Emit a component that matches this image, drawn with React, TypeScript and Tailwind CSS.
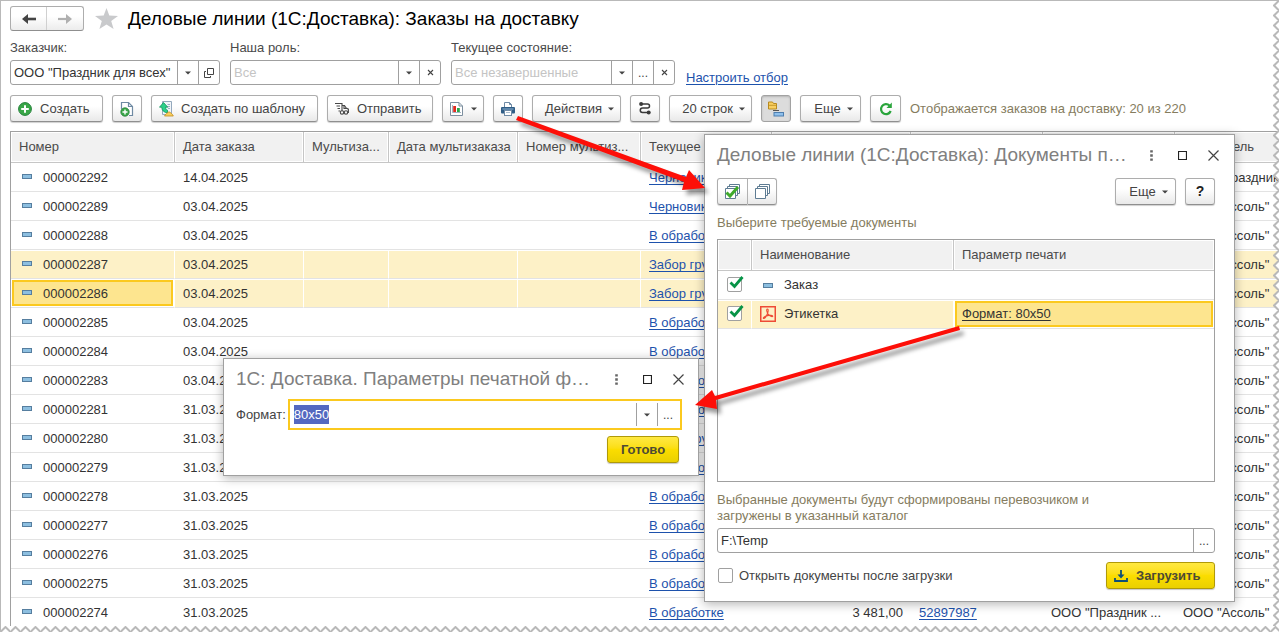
import { useEffect, useRef } from "react";
import type { ReactNode } from "react";

type Order = { id: string; date: string; status: string; total?: string; waybill?: string; customer?: string; sender: string; marked?: boolean; current?: boolean };

const ASSOL = 'ООО "Ассоль"';

const orders: Order[] = [
  { id: "000002292", date: "14.04.2025", status: "Черновик", sender: 'ООО "Праздник для всех"' },
  { id: "000002289", date: "03.04.2025", status: "Черновик", sender: ASSOL },
  { id: "000002288", date: "03.04.2025", status: "В обработке", sender: ASSOL },
  { id: "000002287", date: "03.04.2025", status: "Забор груза", sender: ASSOL, marked: true },
  { id: "000002286", date: "03.04.2025", status: "Забор груза", sender: ASSOL, marked: true, current: true },
  { id: "000002285", date: "03.04.2025", status: "В обработке", sender: ASSOL },
  { id: "000002284", date: "03.04.2025", status: "В обработке", sender: ASSOL },
  { id: "000002283", date: "03.04.2025", status: "В обработке", sender: ASSOL },
  { id: "000002281", date: "31.03.2025", status: "В обработке", sender: ASSOL },
  { id: "000002280", date: "31.03.2025", status: "Забор груза", sender: ASSOL },
  { id: "000002279", date: "31.03.2025", status: "В обработке", sender: ASSOL },
  { id: "000002278", date: "31.03.2025", status: "В обработке", sender: ASSOL },
  { id: "000002277", date: "31.03.2025", status: "В обработке", sender: ASSOL },
  { id: "000002276", date: "31.03.2025", status: "В обработке", sender: ASSOL },
  { id: "000002275", date: "31.03.2025", status: "В обработке", sender: ASSOL },
  { id: "000002274", date: "31.03.2025", status: "В обработке", total: "3 481,00", waybill: "52897987", customer: 'ООО "Праздник ...', sender: ASSOL },
];

const headers = ["Номер", "Дата заказа", "Мультиза...", "Дата мультизаказа", "Номер мультиз...", "Текущее состояние", "", "", "", "Получатель"];

function Caret() {
  return (
    <svg width="6" height="4" viewBox="0 0 6 4" className="shrink-0" aria-hidden="true">
      <path d="M0 0.5H6L3 3.5Z" fill="#444" />
    </svg>
  );
}

function ToolButton({ className = "", label, pressed, start, children }: { className?: string; label?: string; pressed?: boolean; start?: boolean; children: ReactNode }) {
  const look = pressed
    ? "bg-[#dcdcdc] border-[#a2a2a2] shadow-[inset_0_1px_2px_#b5b5b5]"
    : "bg-linear-to-b from-white from-40% to-[#e9e9e9] border-[#adadad] border-b-[#8f8f8f] shadow-[0_1px_1px_#d0d0d0]";
  return (
    <button type="button" aria-label={label} aria-pressed={pressed} className={`flex h-[27px] shrink-0 items-center rounded-[3px] border whitespace-nowrap text-[#444] ${start ? "justify-start pl-[7px]" : "justify-center"} ${look} ${className}`}>
      {children}
    </button>
  );
}

function FieldButton({ label, children }: { label: string; children: ReactNode }) {
  return (
    <button type="button" aria-label={label} className="flex w-[21px] shrink-0 items-center justify-center border-l border-[#a0a0a0] text-[12px] text-[#444]">
      {children}
    </button>
  );
}

function SmallCross() {
  return (
    <svg width="7" height="7" viewBox="0 0 7 7" aria-hidden="true">
      <path d="M1 1L6 6M6 1L1 6" stroke="#444" strokeWidth="1.1" />
    </svg>
  );
}

function Field({ id, label, value, placeholder, className, children }: { id: string; label: string; value?: string; placeholder?: string; className: string; children: ReactNode }) {
  return (
    <div className={`flex flex-col gap-1 ${className}`}>
      <label htmlFor={id} className="leading-4 text-[#4a4a4a]">{label}</label>
      <div className="flex h-[25px] rounded-[3px] border border-[#a0a0a0] bg-white">
        <input id={id} defaultValue={value} placeholder={placeholder} className="min-w-0 flex-1 bg-transparent pl-[3px] text-[#333] outline-none placeholder:text-[#c4c4c4]" />
        {children}
      </div>
    </div>
  );
}

function Dash() {
  return (
    <svg width="10" height="5" viewBox="0 0 10 5" className="shrink-0" aria-hidden="true">
      <rect x="0.5" y="0.5" width="9" height="4" fill="#8dbfe0" stroke="#567e9f" />
    </svg>
  );
}

function WindowControls() {
  return (
    <div className="flex shrink-0 items-center">
      <button type="button" aria-label="Меню" className="flex w-[31px] justify-center">
        <svg width="3" height="11" viewBox="0 0 3 11"><path d="M0.2 0.2h2.6v2.4h-2.6zM0.2 4.3h2.6v2.4h-2.6zM0.2 8.4h2.600v2.400h-2.600z" fill="#666" /></svg>
      </button>
      <button type="button" aria-label="Развернуть" className="flex w-[31px] justify-center">
        <svg width="9" height="9" viewBox="0 0 9 9"><path d="M0.5 0.5h8v8h-8z" fill="none" stroke="#222" strokeWidth="1.2" /></svg>
      </button>
      <button type="button" aria-label="Закрыть" className="flex w-[31px] justify-center">
        <svg width="11" height="11" viewBox="0 0 11 11"><path d="M0.5 0.5L10.5 10.5M10.5 0.5L0.5 10.5" stroke="#444" strokeWidth="1.2" /></svg>
      </button>
    </div>
  );
}

function PlusCircle() {
  return (
    <svg width="14" height="14" viewBox="0 0 14 14" aria-hidden="true">
      <circle cx="7" cy="7" r="6.4" fill="#3aa748" stroke="#24803a" />
      <path d="M7 3.2V10.8M3.2 7H10.8" stroke="#fff" strokeWidth="2" />
    </svg>
  );
}

function PagePlus() {
  return (
    <svg width="14" height="16" viewBox="0 0 14 16" aria-hidden="true">
      <path d="M1.5 8V1.5H8.5L12.5 5.5V14.5H9" fill="#fff" stroke="#6f8aa3" strokeWidth="1.2" />
      <path d="M8.5 1.5V5.5H12.5" fill="none" stroke="#6f8aa3" strokeWidth="1.2" />
      <circle cx="5" cy="11" r="4.2" fill="#3aa748" stroke="#24803a" strokeWidth="0.8" />
      <path d="M5 8.5V13.5M2.5 11H7.5" stroke="#fff" strokeWidth="1.4" />
    </svg>
  );
}

function TemplateIcon() {
  return (
    <svg width="15" height="16" viewBox="0 0 15 16" aria-hidden="true">
      <path d="M3.5 0.5H12.5V13.5H3.5Z" fill="#f1f5f9" stroke="#94a9bd" />
      <path d="M8.500 3.500H11M8.500 5.500H11M9 7.500H11" stroke="#9db1c4" />
      <path d="M4.500 1.500L0.500 6.200H2.700C2.900 9.500 5 11.600 8.500 11.800V9.200C7.200 8.800 6.500 7.800 6.500 6.200H8.800Z" fill="#2bd08a" stroke="#10935a" strokeWidth="0.8" />
      <path d="M5.500 15C6.500 13.200 8 12 10 10.800C11.600 11.600 13.500 13 14.300 15Z" fill="#f8cf5d" stroke="#c08a1d" strokeWidth="0.8" />
    </svg>
  );
}

function TruckIcon() {
  return (
    <svg width="14" height="13" viewBox="0 0 14 13" fill="none" stroke="#484848" strokeWidth="1.1" aria-hidden="true">
      <path d="M0 1.5H7V9M1.500 4H5M2.500 6.500H5M3.500 9H5" />
      <path d="M7 3.500H9.500L11.200 6L13.400 7.200V10.500H12.800M9.300 10.500H8.800" />
      <path d="M9 3.500V6.500H12" />
      <circle cx="7" cy="10.500" r="1.700" />
      <circle cx="11" cy="10.500" r="1.700" />
    </svg>
  );
}

function ReportIcon() {
  return (
    <svg width="13" height="14" viewBox="0 0 13 14" aria-hidden="true">
      <path d="M0.5 0.5H9L12.5 4V13.5H0.5Z" fill="#fff" stroke="#7d8f9f" />
      <path d="M9 0.5V4H12.5" fill="none" stroke="#7d8f9f" />
      <path d="M2.500 3V10.500H11" fill="none" stroke="#8da1b4" strokeWidth="0.8" />
      <rect x="3.2" y="4" width="2.8" height="6" fill="#e02b20" />
      <rect x="7" y="6" width="2.8" height="4" fill="#2aa646" />
    </svg>
  );
}

function PrinterIcon() {
  return (
    <svg width="14" height="14" viewBox="0 0 14 14" aria-hidden="true">
      <path d="M3.5 6V0.5H8.5L10.5 2.5V6" fill="#fff" stroke="#6f8ba6" />
      <path d="M8.5 0.5V2.5H10.5" fill="none" stroke="#6f8ba6" />
      <rect x="0" y="5" width="14" height="6.5" rx="1" fill="#2f5d86" />
      <path d="M1.5 7H12.5" stroke="#91b4d2" />
      <rect x="3.5" y="8.5" width="7" height="5" fill="#fff" stroke="#6f8ba6" />
      <path d="M5 10.5H9" stroke="#a9bccd" />
    </svg>
  );
}

function RouteIcon() {
  return (
    <svg width="12" height="13" viewBox="0 0 12 13" fill="none" stroke="#3b3b3b" strokeWidth="1.5" aria-hidden="true">
      <path d="M2 2H8.5A2 2 0 0 1 8.5 6H3.5A2.2 2.2 0 0 0 3.5 10.5H9.5" />
      <circle cx="2.1" cy="2.1" r="2" fill="#3b3b3b" stroke="none" />
      <circle cx="9.7" cy="10.5" r="2" fill="#3b3b3b" stroke="none" />
    </svg>
  );
}

function TreeIcon() {
  return (
    <svg width="16" height="16" viewBox="0 0 16 16" aria-hidden="true">
      <path d="M0.5 1H4.5L5.5 2.5H8.5V8H0.5Z" fill="#f9cf61" stroke="#b88a1f" />
      <path d="M0.5 4.3H8.5" stroke="#b88a1f" strokeWidth="0.8" />
      <path d="M5 9.5H11" stroke="#555" />
      <rect x="6" y="11.5" width="9.5" height="3.5" fill="#8fc0ec" stroke="#4d7eaf" />
    </svg>
  );
}

function RefreshIcon() {
  return (
    <svg width="14" height="14" viewBox="0 0 14 14" aria-hidden="true">
      <path d="M11.7 9A5 5 0 1 1 10.5 3.5" fill="none" stroke="#2aa53c" strokeWidth="2.2" />
      <path d="M12.8 0.5V6H7.5Z" fill="#2aa53c" />
    </svg>
  );
}

function StackIcon({ checked }: { checked?: boolean }) {
  return (
    <svg width="17" height="16" viewBox="0 0 17 16" aria-hidden="true">
      <g fill="#fff" stroke="#5e7c93">
        <path d="M5.5 0.5H15.5V9.5H5.5Z" />
        <path d="M3.5 2.5H13.5V11.5H3.5Z" />
        <path d="M1.5 4.5H11.5V14.5H1.5Z" />
      </g>
      {checked && <path d="M2.5 8.500L6 12L14 3" fill="none" stroke="#3faa2c" strokeWidth="3" />}
    </svg>
  );
}

function PdfIcon() {
  return (
    <svg width="16" height="16" viewBox="0 0 16 16" fill="none" stroke="#ee4b36" aria-hidden="true">
      <rect x="0.75" y="0.75" width="14.5" height="14.5" strokeWidth="1.5" />
      <path d="M7.2 3C8.6 2.800 8.300 5.500 7.500 7.500C6.500 10 4.500 12.800 3.400 12.400C2.800 11.600 5 10.200 7.500 9.600C10 9 12.800 9.200 12.800 10.300C12 11.400 8.800 9.500 7.700 7.600C6.800 5.700 6.300 3.500 7.200 3Z" strokeWidth="1.1" />
    </svg>
  );
}

function DownloadIcon() {
  return (
    <svg width="14" height="12" viewBox="0 0 14 12" aria-hidden="true">
      <path d="M7 0V5M1 8V11H13V8" fill="none" stroke="#0d4f78" strokeWidth="1.8" />
      <path d="M3.500 4.500H10.500L7 8.500Z" fill="#0d4f78" />
    </svg>
  );
}

function CheckBox({ label, checked }: { label: string; checked?: boolean }) {
  return (
    <span className="relative block size-[15px]">
      <input type="checkbox" aria-label={label} defaultChecked={checked} className="peer block size-[15px] appearance-none rounded-[2px] border border-[#a0a0a0] bg-white" />
      <svg width="15" height="14" viewBox="0 0 15 14" className="pointer-events-none absolute -top-px left-[2px] hidden peer-checked:block" aria-hidden="true">
        <path d="M1.5 6.500L5.500 10.500L13.500 1" fill="none" stroke="#079447" strokeWidth="2.8" />
      </svg>
    </span>
  );
}

function YellowButton({ className, children }: { className: string; children: ReactNode }) {
  return (
    <button type="button" className={`flex h-[27px] items-center gap-2 rounded-[3px] border border-[#b09a08] bg-linear-to-b from-[#ffe940] via-[#fbdd00] to-[#ead000] font-bold text-[#4d4a35] shadow-[0_1px_1px_#c8c8c8] ${className}`}>
      {children}
    </button>
  );
}

function OrderRow({ order }: { order: Order }) {
  const tone = order.marked ? "bg-[#fdf1c7] border-r border-r-white shadow-[inset_0_1px_#fff]" : "";
  const cell = `h-[29px] overflow-hidden whitespace-nowrap border-b border-b-[#e3e3e3] px-2 pt-[2px] ${tone}`;
  const first = order.current
    ? "h-[29px] border-b border-b-[#e3e3e3] border-r border-r-white bg-[#fde58f] px-2 pt-[2px] shadow-[inset_0_0_0_1px_#fff,inset_0_0_0_3px_#fbc91f]"
    : cell;
  return (
    <tr>
      <td className={first}>
        <div className="flex items-center gap-[11px] pl-[3px]">
          <span className="pb-1"><Dash /></span>
          {order.id}
        </div>
      </td>
      <td className={cell}>{order.date}</td>
      <td className={cell} />
      <td className={cell} />
      <td className={cell} />
      <td className={cell}><a href="#status" className="text-[#1d52ac] underline underline-offset-2">{order.status}</a></td>
      <td className={`${cell} text-right`}>{order.total}</td>
      <td className={cell}>{order.waybill && <a href="#waybill" className="text-[#1d52ac] underline underline-offset-2">{order.waybill}</a>}</td>
      <td className={cell}>{order.customer}</td>
      <td className={cell}>{order.sender}</td>
    </tr>
  );
}

function DocumentsDialog() {
  const th = "h-[31px] border-b border-b-[#c6c6c6] bg-[#f1f1f1] px-2 text-left font-normal text-[#4a4a4a] shadow-[inset_0_0_0_1px_#fff]";
  const marked = "h-[29px] border-b border-r border-b-[#e3e3e3] border-r-white bg-[#fdf1c7] px-2 shadow-[inset_0_1px_#fff]";
  const plain = "h-[29px] border-b border-b-[#e3e3e3] px-2";
  return (
    <section role="dialog" aria-label="Документы" className="absolute top-[133px] left-[703px] flex w-[531px] flex-col border border-[#a0a0a0] bg-white pr-[19px] pb-3 pl-3 shadow-[0_2px_10px_rgba(0,0,0,0.3)]">
      <div className="-mr-[14px] flex h-[43px] items-center justify-between pb-[2px]">
        <h2 className="text-[19px] whitespace-nowrap text-[#808080]">Деловые линии (1С:Доставка): Документы п…</h2>
        <WindowControls />
      </div>
      <div className="flex gap-[9px]">
        <div className="mr-auto flex">
          <ToolButton label="Выбрать все" className="w-[31px] rounded-r-none"><StackIcon checked /></ToolButton>
          <ToolButton label="Снять выбор" className="w-[29px] rounded-l-none border-l-0"><StackIcon /></ToolButton>
        </div>
        <ToolButton className="w-[61px] gap-[6px] pl-[6px]">Еще <Caret /></ToolButton>
        <ToolButton label="Справка" className="w-[30px]"><span className="text-[14px] font-bold text-[#222]">?</span></ToolButton>
      </div>
      <p className="mt-[10px] leading-4 text-[#857c5e]">Выберите требуемые документы</p>
      <div className="mt-[8px] min-h-[243px] border border-[#a0a0a0]">
        <table className="w-full table-fixed border-separate border-spacing-0">
          <colgroup>
            <col className="w-[34px]" />
            <col className="w-[202px]" />
            <col />
          </colgroup>
          <thead>
            <tr>
              <th className={`${th} border-r border-r-[#c6c6c6]`} />
              <th className={`${th} border-r border-r-[#c6c6c6]`}>Наименование</th>
              <th className={th}>Параметр печати</th>
            </tr>
          </thead>
          <tbody>
            <tr>
              <td className={`${plain} pr-0 pb-[2px] pl-[9px]`}><CheckBox label="Заказ" checked /></td>
              <td className={plain}><div className="flex items-center gap-[11px] pl-[3px]"><Dash />Заказ</div></td>
              <td className={plain} />
            </tr>
            <tr>
              <td className={`${marked} pr-0 pb-[2px] pl-[9px]`}><CheckBox label="Этикетка" checked /></td>
              <td className={marked}><div className="flex items-center gap-2"><PdfIcon />Этикетка</div></td>
              <td className="h-[29px] border-b border-b-[#e3e3e3] bg-[#fde58f] px-2 shadow-[inset_0_0_0_1px_#fff,inset_0_0_0_3px_#fbc91f]">
                <a href="#format" className="underline underline-offset-2">Формат: 80x50</a>
              </td>
            </tr>
          </tbody>
        </table>
      </div>
      <label htmlFor="folder" className="mt-[10px] max-w-[400px] leading-4 text-[#857c5e]">Выбранные документы будут сформированы перевозчиком и загружены в указанный каталог</label>
      <div className="mt-[4px] flex h-[25px] rounded-[3px] border border-[#a0a0a0]">
        <input id="folder" defaultValue="F:\Temp" className="min-w-0 flex-1 bg-transparent pl-[3px] text-[#333] outline-none" />
        <FieldButton label="Выбрать каталог">...</FieldButton>
      </div>
      <div className="mt-[9px] flex items-center justify-between">
        <label className="flex items-center gap-[6px] text-[#444]">
          <span className="pl-px"><CheckBox label="Открыть документы после загрузки" /></span>
          Открыть документы после загрузки
        </label>
        <YellowButton className="w-[109px] pl-[7px]"><DownloadIcon />Загрузить</YellowButton>
      </div>
    </section>
  );
}

function FormatDialog() {
  const input = useRef<HTMLInputElement>(null);
  useEffect(() => {
    input.current?.focus();
    input.current?.select();
  }, []);
  return (
    <section role="dialog" aria-label="Параметры печатной формы" className="absolute top-[357px] left-[222px] flex w-[476px] flex-col border border-[#a0a0a0] bg-white pr-4 pb-3 pl-3 shadow-[0_2px_10px_rgba(0,0,0,0.3)]">
      <div className="-mr-[12px] flex h-10 items-center justify-between">
        <h2 className="text-[19px] whitespace-nowrap text-[#808080]">1С: Доставка. Параметры печатной ф…</h2>
        <WindowControls />
      </div>
      <div className="flex items-center gap-[2px]">
        <label htmlFor="format" className="text-[#444]">Формат:</label>
        <div className="flex h-[31px] min-w-0 flex-1 border-2 border-[#fbc91f] py-[2px] pr-[2px]">
          <input id="format" ref={input} defaultValue="80x50" className="min-w-0 flex-1 bg-transparent pl-1 text-[#333] outline-none selection:bg-[#5468c0] selection:text-white" />
          <FieldButton label="Открыть список"><Caret /></FieldButton>
          <FieldButton label="Выбрать">...</FieldButton>
        </div>
      </div>
      <div className="mt-[6px] mr-[3px] flex justify-end">
        <YellowButton className="w-[72px] justify-center">Готово</YellowButton>
      </div>
    </section>
  );
}

function TornEdges() {
  return (
    <>
      <svg className="pointer-events-none absolute top-0 right-0 h-full w-[6px]" aria-hidden="true">
        <pattern id="edge-right" width="6" height="10" patternUnits="userSpaceOnUse">
          <path d="M6 -1L1 4.5L6 10V-1Z" fill="#fff" />
          <path d="M6 -0.500L1 4.500L6 9.500L7 10.500" fill="none" stroke="#b9b9b9" strokeWidth="2" />
        </pattern>
        <rect width="6" height="100%" fill="url(#edge-right)" />
      </svg>
      <svg className="pointer-events-none absolute bottom-0 left-0 h-[6px] w-full" aria-hidden="true">
        <pattern id="edge-bottom" width="10" height="6" patternUnits="userSpaceOnUse">
          <rect width="10" height="6" fill="#fff" />
          <path d="M-0.500 6L4.500 1L9.500 6L10.500 7" fill="none" stroke="#b9b9b9" strokeWidth="2" />
        </pattern>
        <rect width="100%" height="6" fill="url(#edge-bottom)" />
      </svg>
    </>
  );
}

function Arrows() {
  return (
    <svg width="1200" height="600" className="pointer-events-none absolute top-0 left-0" aria-hidden="true">
      <g fill="#fd0f08" style={{ filter: "drop-shadow(4px 5px 2px rgba(0,0,0,0.4))" }}>
        <path d="M517 115L685 176L688 169L704 187L681 189L683 181L515 119Z" />
        <path d="M958 325L714 395L711 389L694 404L716 408L715 399L959 329Z" />
      </g>
    </svg>
  );
}

export default function App() {
  return (
    <main className="relative w-full overflow-hidden border-t border-l border-[#b9b9b9] bg-white pl-[9px] font-['Liberation_Sans',Arial,sans-serif] text-[13px] text-[#333]">
      <header className="flex items-center pt-[5px]">
        <div className="flex h-[25px] rounded-[3px] border border-[#adadad] border-b-[#8f8f8f] bg-linear-to-b from-white from-40% to-[#ececec]">
          <button type="button" aria-label="Назад" className="flex w-9 items-center justify-center border-r border-[#d0d0d0]">
            <svg width="14" height="10" viewBox="0 0 14 10"><path d="M14 5H4" stroke="#444" strokeWidth="2.6" /><path d="M6 0V10L0 5Z" fill="#444" /></svg>
          </button>
          <button type="button" aria-label="Вперед" className="flex w-9 items-center justify-center">
            <svg width="14" height="10" viewBox="0 0 14 10"><path d="M0 5H10" stroke="#b0b0b0" strokeWidth="2.2" /><path d="M8 0V10L14 5Z" fill="#b0b0b0" /></svg>
          </button>
        </div>
        <button type="button" aria-label="В избранное" className="ml-[11px]">
          <svg width="23" height="21" viewBox="0 0 23 21"><path d="M11.5 0L14.3 7.6L23 8L16.2 13.1L18.6 21L11.5 16.4L4.4 21L6.8 13.1L0 8L8.7 7.6Z" fill="#c9cacc" /></svg>
        </button>
        <h1 className="ml-[10px] text-[19px] leading-6 text-black">Деловые линии (1С:Доставка): Заказы на доставку</h1>
      </header>

      <div className="mt-[9px] flex items-end">
        <Field id="customer" label="Заказчик:" value={'ООО "Праздник для всех"'} className="w-[210px]">
          <FieldButton label="Открыть список"><Caret /></FieldButton>
          <FieldButton label="Открыть">
            <svg width="10" height="10" viewBox="0 0 10 10" fill="none" stroke="#444"><path d="M3.5 0.5H9.5V6.5H3.5Z" /><path d="M2 3.5H0.5V9.5H6.5V8" /></svg>
          </FieldButton>
        </Field>
        <Field id="role" label="Наша роль:" placeholder="Все" className="ml-[10px] w-[211px]">
          <FieldButton label="Открыть список"><Caret /></FieldButton>
          <FieldButton label="Очистить"><SmallCross /></FieldButton>
        </Field>
        <Field id="state" label="Текущее состояние:" placeholder="Все незавершенные" className="ml-[10px] w-[224px]">
          <FieldButton label="Открыть список"><Caret /></FieldButton>
          <FieldButton label="Выбрать">...</FieldButton>
          <FieldButton label="Очистить"><SmallCross /></FieldButton>
        </Field>
        <a href="#filter" className="ml-[11px] leading-[14px] text-[#1d52ac] underline underline-offset-2">Настроить отбор</a>
      </div>

      <div role="toolbar" className="mt-[10px] flex items-center gap-[9px]">
        <ToolButton start className="w-[93px] gap-2"><PlusCircle />Создать</ToolButton>
        <ToolButton label="Скопировать" className="w-[30px]"><PagePlus /></ToolButton>
        <ToolButton start className="w-[167px] gap-[7px]"><TemplateIcon />Создать по шаблону</ToolButton>
        <ToolButton start className="w-[106px] gap-2"><TruckIcon />Отправить</ToolButton>
        <ToolButton label="Отчеты" className="w-[42px] gap-2"><ReportIcon /><Caret /></ToolButton>
        <ToolButton label="Печать" className="w-[30px]"><PrinterIcon /></ToolButton>
        <ToolButton className="w-[89px] gap-[6px] pl-[6px]">Действия <Caret /></ToolButton>
        <ToolButton label="Маршрут" className="w-[30px]"><RouteIcon /></ToolButton>
        <ToolButton className="w-[83px] gap-[6px] pl-[6px]">20 строк <Caret /></ToolButton>
        <ToolButton label="Группировка" pressed className="w-[30px]"><TreeIcon /></ToolButton>
        <ToolButton className="w-[61px] gap-[6px] pl-[6px]">Еще <Caret /></ToolButton>
        <ToolButton label="Обновить" className="w-[31px]"><RefreshIcon /></ToolButton>
        <p className="whitespace-nowrap text-[#857c5e]">Отображается заказов на доставку: 20 из 220</p>
      </div>

      <div className="mt-[9px] border-t border-l border-[#a0a0a0] pb-[5px]">
        <table className="w-full table-fixed border-separate border-spacing-0">
          <colgroup>
            <col className="w-[164px]" />
            <col className="w-[129px]" />
            <col className="w-[85px]" />
            <col className="w-[129px]" />
            <col className="w-[123px]" />
            <col className="w-[131px]" />
            <col className="w-[139px]" />
            <col className="w-[132px]" />
            <col className="w-[132px]" />
            <col />
          </colgroup>
          <thead>
            <tr>
              {headers.map((title, i) => (
                <th key={i} className="h-[31px] overflow-hidden border-r border-b border-[#c6c6c6] bg-[#f1f1f1] px-2 text-left font-normal whitespace-nowrap text-[#4a4a4a] shadow-[inset_0_0_0_1px_#fff]">{title}</th>
              ))}
            </tr>
          </thead>
          <tbody>
            {orders.map((order) => <OrderRow key={order.id} order={order} />)}
          </tbody>
        </table>
      </div>

      <TornEdges />
      <DocumentsDialog />
      <FormatDialog />
      <Arrows />
    </main>
  );
}
